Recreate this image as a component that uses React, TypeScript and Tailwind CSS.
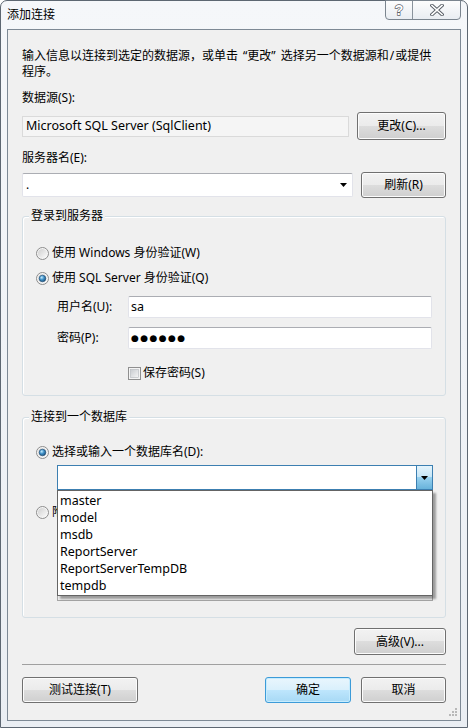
import React from "react";

function Radio({ checked }: { checked?: boolean }) {
  return (
    <svg width="13" height="13" viewBox="0 0 13 13" className="shrink-0">
      <defs>
        <linearGradient id="rg" x1="0" y1="0" x2="1" y2="1">
          <stop offset="0" stopColor="#cfcfcf" />
          <stop offset="1" stopColor="#fbfbfb" />
        </linearGradient>
        <radialGradient id="rd" cx="0.38" cy="0.35" r="0.75">
          <stop offset="0" stopColor="#c4ecfd" />
          <stop offset="0.45" stopColor="#3f90c8" />
          <stop offset="1" stopColor="#17476e" />
        </radialGradient>
      </defs>
      <circle cx="6.5" cy="6.5" r="6" fill="#f6f6f6" stroke="#8c8c8c" />
      <circle cx="6.5" cy="6.5" r="4.6" fill="url(#rg)" />
      {checked && <circle cx="6.5" cy="6.5" r="3.3" fill="url(#rd)" stroke="#1d4a72" strokeWidth="0.6" />}
    </svg>
  );
}

function Check() {
  return (
    <svg width="13" height="13" viewBox="0 0 13 13" className="shrink-0">
      <defs>
        <linearGradient id="cg" x1="0" y1="0" x2="1" y2="1">
          <stop offset="0" stopColor="#c8cbcf" />
          <stop offset="1" stopColor="#f6f6f6" />
        </linearGradient>
      </defs>
      <rect x="0.5" y="0.5" width="12" height="12" fill="#f4f4f4" stroke="#8f8f8f" />
      <rect x="2.5" y="2.5" width="8" height="8" fill="url(#cg)" stroke="#b5b8bc" strokeWidth="0.6" />
    </svg>
  );
}

function Arrow() {
  return (
    <svg width="7" height="4" viewBox="0 0 7 4" className="shrink-0">
      <path d="M0 0h7L3.5 4z" fill="#000" />
    </svg>
  );
}

function Btn({ className, children, primary }: { className: string; children: React.ReactNode; primary?: boolean }) {
  return (
    <div
      className={
        "flex items-center justify-center rounded-[3px] border leading-none " +
        (primary
          ? "border-[#3c9bd8] bg-[linear-gradient(to_bottom,#e9f6fd_0%,#d9f0fc_50%,#bee6fd_50%,#a7d9f5_100%)] shadow-[inset_0_0_0_1px_#c6ecfe] "
          : "border-[#707070] bg-[linear-gradient(to_bottom,#f2f2f2_0%,#ebebeb_50%,#dddddd_50%,#cfcfcf_100%)] shadow-[inset_0_0_0_1px_#fcfcfc] ") +
        className
      }
    >
      {children}
    </div>
  );
}

export default function App() {
  return (
    <div className="w-[468px] h-[728px] bg-white">
      <div className="relative flex h-[728px] w-[468px] flex-col rounded-t-[7px] border border-[#5d6772] bg-[linear-gradient(to_bottom,#f5f7fa,#eaeef3)] font-['Noto_Sans','Noto_Sans_CJK_SC',sans-serif] text-[12px] text-black">
        {/* title bar */}
        <div className="flex h-[28px] items-start">
          <div className="pl-[6px] pt-[6px] leading-[16px]">添加连接</div>
          <div className="ml-auto mr-[6px] -mt-px flex h-[20px] w-[76px] overflow-hidden rounded-b-[4px] border border-[#7b858f] bg-[linear-gradient(to_bottom,#fdfdfd,#e9edf2)]">
            <div className="flex w-[27px] items-center justify-center border-r border-[#8a939c]">
              <svg width="12" height="14" viewBox="0 0 12 14">
                <text x="6" y="12" textAnchor="middle" fontSize="14" fontWeight="bold" fontFamily="Liberation Sans, sans-serif" fill="#ffffff" stroke="#5a6068" strokeWidth="1.3" paintOrder="stroke">?</text>
              </svg>
            </div>
            <div className="flex flex-1 items-center justify-center">
              <svg width="14" height="12" viewBox="0 0 14 12">
                <path d="M2 1.5L12 10.5M12 1.5L2 10.5" stroke="#5a6068" strokeWidth="3.6" strokeLinecap="square" />
                <path d="M2 1.5L12 10.5M12 1.5L2 10.5" stroke="#ffffff" strokeWidth="1.6" strokeLinecap="square" />
              </svg>
            </div>
          </div>
        </div>

        {/* client area */}
        <div className="relative mx-[6px] flex h-[692px] flex-col border border-[#7d8995] bg-[#f0f0f0] pl-[14px] pr-[14px] pt-[18px]">
          <div className="whitespace-nowrap leading-[16px]">
            输入信息以连接到选定的数据源，或单击<span className="ml-[5px]">“</span>更改<span className="mr-[5px]">”</span>选择另一个数据源和<span className="mx-[1px]">/</span>或提供
            <br />
            程序。
          </div>

          <div className="mt-[10px] leading-[16px]">数据源(S):</div>
          <div className="mt-[6px] flex items-center gap-[8px]">
            <div className="flex h-[21px] w-[327px] items-center border border-[#dadada] bg-[#f5f5f5] pl-[3px] text-[12.5px] leading-none">
              Microsoft SQL Server (SqlClient)
            </div>
            <Btn className="h-[28px] w-[89px]">更改(C)...</Btn>
          </div>

          <div className="mt-[10px] leading-[16px]">服务器名(E):</div>
          <div className="mt-[6px] flex items-center gap-[8px]">
            <div className="flex h-[24px] w-[331px] items-center rounded-[2px] border border-[#e2e3ea] border-t-[#abadb3] bg-white pl-[3px] pr-[5px] leading-none">
              <span>.</span>
              <span className="ml-auto">
                <Arrow />
              </span>
            </div>
            <Btn className="h-[26px] w-[85px]">刷新(R)</Btn>
          </div>

          {/* group: login */}
          <div className="mt-[18px] flex h-[180px] flex-col rounded-[3px] border border-[#d5dfe5] shadow-[inset_1px_1px_0_#ffffff]">
            <div className="-mt-[9px] ml-[6px] w-fit bg-[#f0f0f0] px-[2px] leading-[16px]">登录到服务器</div>
            <div className="ml-[13px] mt-[21px] flex items-center gap-[3px] leading-[16px]">
              <Radio />
              <span>使用 Windows 身份验证(W)</span>
            </div>
            <div className="ml-[13px] mt-[9px] flex items-center gap-[3px] leading-[16px]">
              <Radio checked />
              <span>使用 SQL Server 身份验证(Q)</span>
            </div>
            <div className="ml-[34px] mt-[10px] flex items-center">
              <div className="w-[71px] leading-[16px]">用户名(U):</div>
              <div className="flex h-[22px] w-[304px] items-center rounded-[2px] border border-[#e2e3ea] border-t-[#abadb3] bg-white pl-[2px] text-[12.5px] leading-none">
                sa
              </div>
            </div>
            <div className="ml-[34px] mt-[9px] flex items-center">
              <div className="w-[71px] leading-[16px]">密码(P):</div>
              <div className="flex h-[22px] w-[304px] items-center rounded-[2px] border border-[#e2e3ea] border-t-[#abadb3] bg-white pl-[2px] font-['DejaVu_Sans',sans-serif] text-[9px] tracking-[1.4px] leading-none">
                ●●●●●●
              </div>
            </div>
            <div className="ml-[105px] mt-[16px] flex items-center gap-[2px] leading-[16px]">
              <Check />
              <span>保存密码(S)</span>
            </div>
          </div>

          {/* group: database */}
          <div className="mt-[21px] flex h-[201px] flex-col rounded-[3px] border border-[#d5dfe5] shadow-[inset_1px_1px_0_#ffffff]">
            <div className="-mt-[9px] ml-[6px] w-fit bg-[#f0f0f0] px-[2px] leading-[16px]">连接到一个数据库</div>
            <div className="ml-[13px] mt-[19px] flex items-center gap-[3px] leading-[16px]">
              <Radio checked />
              <span>选择或输入一个数据库名(D):</span>
            </div>
            <div className="relative z-10 ml-[34px] mt-[5px] w-[376px]">
              <div className="flex h-[25px] items-stretch border border-[#3c7fb1] bg-white">
                <div className="flex-1" />
                <div className="flex w-[16px] items-center justify-center border-l border-[#3c7fb1] bg-[linear-gradient(to_bottom,#e5f4fc_0%,#c4e5f6_50%,#98d1ef_50%,#68b3db_100%)]">
                  <Arrow />
                </div>
              </div>
              <div className="absolute left-0 top-full w-[376px] border border-[#646464] bg-white py-px pl-[2px] text-[12.5px] leading-[17px] shadow-[3px_3px_2px_rgba(0,0,0,0.35)]">
                <div>master</div>
                <div>model</div>
                <div>msdb</div>
                <div>ReportServer</div>
                <div>ReportServerTempDB</div>
                <div>tempdb</div>
              </div>
            </div>
            <div className="ml-[13px] mt-[14px] flex items-center gap-[3px] leading-[16px]">
              <Radio />
              <span>附加一个数据库文件(H):</span>
            </div>
            <div className="ml-[34px] mt-[7px] h-[74px] w-[376px] border border-[#a6a6a6] bg-[#f0f0f0]" />
          </div>

          <Btn className="mt-[10px] h-[27px] w-[92px] self-end">高级(V)...</Btn>

          <div className="mt-[9px] h-px bg-[#a0a0a0]" />

          <div className="mt-[12px] flex items-center">
            <Btn className="h-[26px] w-[116px]">测试连接(T)</Btn>
            <Btn primary className="ml-auto h-[26px] w-[86px]">确定</Btn>
            <Btn className="ml-[10px] h-[26px] w-[85px]">取消</Btn>
          </div>

          <svg width="10" height="10" viewBox="0 0 10 10" className="absolute bottom-[3px] right-[2px]">
            <g fill="#b8b8b8">
              <rect x="7" y="1" width="2" height="2" />
              <rect x="4" y="4" width="2" height="2" />
              <rect x="7" y="4" width="2" height="2" />
              <rect x="1" y="7" width="2" height="2" />
              <rect x="4" y="7" width="2" height="2" />
              <rect x="7" y="7" width="2" height="2" />
            </g>
          </svg>
        </div>
      </div>
    </div>
  );
}
